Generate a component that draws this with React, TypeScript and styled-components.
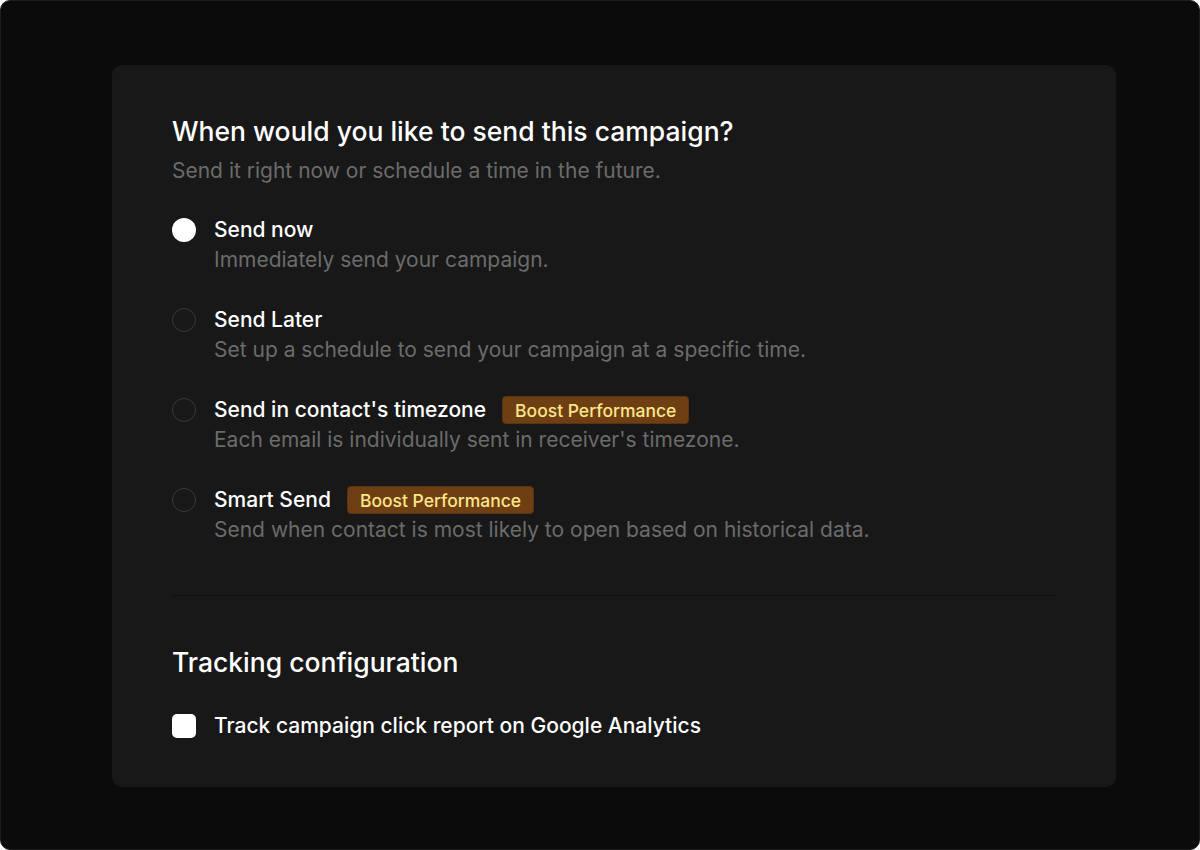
import React, { useState } from 'react';
import styled, { createGlobalStyle } from 'styled-components';

const GlobalStyle = createGlobalStyle`
  * { box-sizing: border-box; }
  html, body { margin: 0; padding: 0; background: #ffffff; }
  body { font-family: Inter, 'Noto Sans', sans-serif; }
`;

type Option = { id: string; title: string; text: string; boost?: boolean };

const options: Option[] = [
  { id: 'now', title: 'Send now', text: 'Immediately send your campaign.' },
  { id: 'later', title: 'Send Later', text: 'Set up a schedule to send your campaign at a specific time.' },
  { id: 'tz', title: "Send in contact's timezone", text: "Each email is individually sent in receiver's timezone.", boost: true },
  { id: 'smart', title: 'Smart Send', text: 'Send when contact is most likely to open based on historical data.', boost: true },
];

export default function App() {
  const [selected, setSelected] = useState<string>('now');
  const [track, setTrack] = useState<boolean>(true);
  return (
    <>
      <GlobalStyle />
      <Frame>
        <Card>
          <Title>When would you like to send this campaign?</Title>
          <Subtitle>Send it right now or schedule a time in the future.</Subtitle>
          <OptionList>
            {options.map((item) => (
              <OptionRow key={item.id} onClick={() => setSelected(item.id)}>
                <Radio $checked={selected === item.id} />
                <OptionBody>
                  <OptionHead>
                    <OptionTitle>{item.title}</OptionTitle>
                    {item.boost && <Badge>Boost Performance</Badge>}
                  </OptionHead>
                  <OptionText>{item.text}</OptionText>
                </OptionBody>
              </OptionRow>
            ))}
          </OptionList>
          <Divider />
          <SectionTitle>Tracking configuration</SectionTitle>
          <CheckRow onClick={() => setTrack((v) => !v)}>
            <Checkbox $checked={track} />
            <CheckLabel>Track campaign click report on Google Analytics</CheckLabel>
          </CheckRow>
        </Card>
      </Frame>
    </>
  );
}

const Frame = styled.div`
  width: 1200px;
  height: 850px;
  background: #0b0b0b;
  border: 1px solid #1e1e1e;
  border-radius: 10px;
  padding: 64px 83px 0 111px;
`;

const Card = styled.div`
  background: #181818;
  border-radius: 10px;
  padding: 49px 60px 46px 60px;
  width: 1004px;
`;

const Title = styled.h1`
  margin: 0;
  font-size: 26.5px;
  line-height: 34px;
  font-weight: 500;
  color: #ffffff;
`;

const Subtitle = styled.p`
  margin: 8px 0 0;
  font-size: 21px;
  line-height: 30px;
  color: #6b6b6b;
`;

const OptionList = styled.div`
  display: flex;
  flex-direction: column;
  gap: 30px;
  margin-top: 29px;
`;

const OptionRow = styled.div`
  display: flex;
  gap: 18px;
  cursor: pointer;
`;

const Radio = styled.span<{ $checked: boolean }>`
  flex: none;
  width: 24px;
  height: 24px;
  margin-top: 3px;
  border-radius: 50%;
  border: ${(p) => (p.$checked ? 'none' : '1.5px solid #3a3a3a')};
  background: ${(p) => (p.$checked ? '#ffffff' : 'transparent')};
`;

const OptionBody = styled.div`
  display: flex;
  flex-direction: column;
`;

const OptionHead = styled.div`
  display: flex;
  align-items: center;
  gap: 16px;
  height: 30px;
`;

const OptionTitle = styled.span`
  font-size: 21px;
  line-height: 30px;
  font-weight: 500;
  color: #ffffff;
`;

const Badge = styled.span`
  display: inline-flex;
  align-items: center;
  height: 28px;
  padding: 0 12px;
  border-radius: 4px;
  background: #6e3f13;
  border: 1px solid #5a3310;
  color: #fde68a;
  font-size: 17.5px;
  font-weight: 500;
`;

const OptionText = styled.span`
  font-size: 21px;
  line-height: 30px;
  color: #6b6b6b;
`;

const Divider = styled.hr`
  margin: 50px 0 0;
  border: none;
  height: 1px;
  background: #111111;
`;

const SectionTitle = styled.h2`
  margin: 49px 0 0;
  font-size: 26.5px;
  line-height: 34px;
  font-weight: 500;
  color: #ffffff;
`;

const CheckRow = styled.div`
  display: flex;
  align-items: center;
  gap: 18px;
  margin-top: 32px;
  cursor: pointer;
`;

const Checkbox = styled.span<{ $checked: boolean }>`
  flex: none;
  width: 24px;
  height: 24px;
  border-radius: 5px;
  background: ${(p) => (p.$checked ? '#ffffff' : 'transparent')};
  border: ${(p) => (p.$checked ? 'none' : '1.5px solid #3a3a3a')};
`;

const CheckLabel = styled.span`
  font-size: 21px;
  line-height: 30px;
  font-weight: 500;
  color: #ffffff;
`;
